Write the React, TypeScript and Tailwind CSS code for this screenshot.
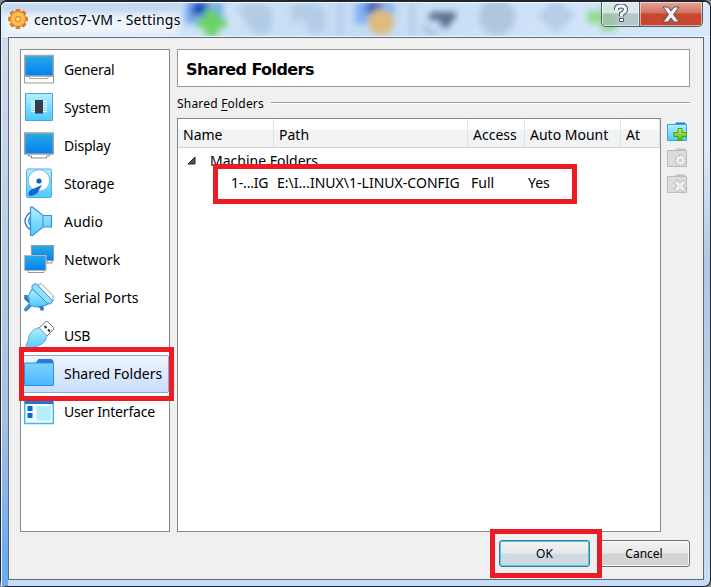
import React from "react";

const ui = "font-['Noto_Sans','Open_Sans',sans-serif]";

function Defs() {
  return (
    <svg width="0" height="0" className="absolute">
      <defs>
        <linearGradient id="screen" x1="0" y1="0" x2="0" y2="1">
          <stop offset="0" stopColor="#29abe2" />
          <stop offset="1" stopColor="#0280f3" />
        </linearGradient>
        <linearGradient id="cyan" x1="0" y1="0" x2="0" y2="1">
          <stop offset="0" stopColor="#b2f1ff" />
          <stop offset="1" stopColor="#4dc8fd" />
        </linearGradient>
        <linearGradient id="folder" x1="0" y1="0" x2="0" y2="1">
          <stop offset="0" stopColor="#80d2fc" />
          <stop offset="1" stopColor="#49b7ff" />
        </linearGradient>
        <linearGradient id="gold" x1="0" y1="0" x2="0" y2="1">
          <stop offset="0" stopColor="#ffc14c" />
          <stop offset="1" stopColor="#f07818" />
        </linearGradient>
        <linearGradient id="green" x1="0" y1="0" x2="0" y2="1">
          <stop offset="0" stopColor="#c8f060" />
          <stop offset="1" stopColor="#4cb80c" />
        </linearGradient>
        <filter id="soft" x="-30%" y="-30%" width="160%" height="160%">
          <feGaussianBlur stdDeviation="3" />
        </filter>
      </defs>
    </svg>
  );
}

/* Every sidebar drawing uses a 32 x 32 box. */
const art: Record<string, React.ReactNode> = {
  General: (
    <>
      <path d="M1.500 22.500h29v6.500h-29z" fill="#fff" stroke="#999" />
      <path d="M6.500 22.500v2h18.500v-2" fill="#fff" stroke="#aaa" />
      <path d="M1.700 1.500h28.600v20.500H1.700z" fill="url(#screen)" stroke="#a9a9a9" strokeWidth="1.4" />
    </>
  ),
  System: (
    <>
      <path d="M2.500 1.500h27v27h-27z" fill="url(#cyan)" stroke="#4ba2e0" />
      <path d="M8 9.500h16M8 12h16M8 14.500h16M8 17h16M8 19.500h16" stroke="#fff" />
      <path d="M12 8h8v13.500h-8z" fill="#363c49" />
    </>
  ),
  Display: (
    <>
      <path d="M5.500 24v2h3v2h15v-2h3v-2" fill="#fff" stroke="#888" />
      <path d="M1.700 3h28.600v21H1.700z" fill="url(#screen)" stroke="#a3a3a3" strokeWidth="1.5" />
    </>
  ),
  Storage: (
    <>
      <rect x="3.500" y="1" width="25" height="28.500" rx="1.500" fill="url(#cyan)" stroke="#55aee8" />
      <circle cx="16" cy="12.500" r="10.800" fill="#fff" stroke="#58a7dc" strokeWidth=".8" />
      <circle cx="16" cy="13" r="2.600" fill="#0865cc" />
      <path d="M19 17L7.500 22q-3.500 4-1.500 5.500t8-2z" fill="#1266d1" />
    </>
  ),
  Audio: (
    <>
      <path d="M7 6.500Q-3 15 7 23.500" fill="none" stroke="#2777c7" strokeWidth="1.4" />
      <path d="M8 10Q3 15 8 20z" fill="#7ed9fc" stroke="#3b91d4" strokeWidth="1.200" />
      <path d="M7.500 1.200h2L20 9.500h8.500v11.500H20L9.500 29.500h-2z" fill="url(#cyan)" stroke="#3b91d4" strokeWidth="1.200" />
      <path d="M20 9v12" stroke="#3b91d4" />
    </>
  ),
  Network: (
    <>
      <path d="M24 17v2h5v-2" fill="#fff" stroke="#888" />
      <path d="M8.500 1.500h22v15h-22z" fill="url(#screen)" stroke="#999" strokeWidth="1.200" />
      <path d="M5 26v2.500h16V26" fill="#fff" stroke="#999" />
      <path d="M1.500 11.500h21.500v15H1.500z" fill="url(#screen)" stroke="#b7b7b7" strokeWidth="1.200" />
    </>
  ),
  "Serial Ports": (
    <>
      <path d="M15 3l3-1.500 12 12V19l-2 2z" fill="#fff" stroke="#999" />
      <path d="M8 22l-5 5.500" stroke="#378fd1" strokeWidth="4" strokeLinecap="round" />
      <path d="M3 13v3.500l4 3.500M19 28.500v-3l-4-3" stroke="#2a79c9" strokeWidth="3.500" fill="none" />
      <path d="M9 7L5.500 13.500l1 10 8 1.500 9-2 3-2z" fill="url(#cyan)" stroke="#378fd1" />
      <path d="M9 3.500L13 1.500l16.500 17-2 3.500-3-.5L9 6.500z" fill="#8fe1fd" stroke="#378fd1" />
    </>
  ),
  USB: (
    <>
      <path d="M16 8l7-6.500h1.500l6 6V9.500L24 16z" fill="#fff" stroke="#777" />
      <path d="M21.500 6l2 2M25 9.500l2 2" stroke="#333" strokeWidth="2" />
      <path d="M16 7.500l8 8.500q-1 6-6 8.500-7 2-10 5.500H3q-1-4 2-9 1-11 11-13.500z" fill="url(#cyan)" stroke="#6aa6d2" />
    </>
  ),
  "Shared Folders": (
    <>
      <path d="M12.500 5l3-4h13l2 2V9H12z" fill="#2a79db" />
      <path d="M1.500 5h29v22.500h-29z" fill="url(#folder)" stroke="#2b91e8" />
    </>
  ),
  "User Interface": (
    <>
      <path d="M1.700 2h28.600v25.500H1.700z" fill="#f6fbff" stroke="#42b5ed" strokeWidth="1.500" />
      <path d="M2 2h28v6H2z" fill="#2475d3" />
      <path d="M4.500 10h5v5h-5zM4.500 17h5v5h-5z" fill="#0868d8" />
      <path d="M13.500 10H28v14.500H13.500z" fill="#b6edfd" />
    </>
  ),
};

const sections: [string, string][] = [
  ["General", "tracking-[-0.15px]"],
  ["System", "tracking-[-0.15px]"],
  ["Display", "tracking-[-0.2px]"],
  ["Storage", "tracking-[-0.1px]"],
  ["Audio", "tracking-[0.2px]"],
  ["Network", "tracking-[0px]"],
  ["Serial Ports", "tracking-[0px]"],
  ["USB", "tracking-[-0.3px]"],
  ["Shared Folders", "tracking-[0px]"],
  ["User Interface", "tracking-[-0.2px]"],
];

function Sidebar() {
  return (
    <nav className="h-[483px] w-[150px] shrink-0 border border-[#828790] bg-white pt-px">
      {sections.map(([name, tracking]) => (
        <div
          key={name}
          className={`flex h-[38px] items-center rounded-[2px] border pl-[2px] ${
            name === "Shared Folders"
              ? "border-[#84acdd] bg-linear-to-b from-[#eef5ff] to-[#c9defc]"
              : "border-transparent"
          }`}
        >
          <svg width="32" height="32" viewBox="0 0 32 32" className="-ml-px shrink-0">
            {art[name]}
          </svg>
          <span className={`ml-[9px] text-[14px] leading-5 whitespace-nowrap ${tracking}`}>{name}</span>
        </div>
      ))}
    </nav>
  );
}

const columns: [string, string][] = [
  ["Name", "w-[96px]"],
  ["Path", "w-[194px]"],
  ["Access", "w-[57px]"],
  ["Auto Mount", "w-[96px]"],
  ["At", "w-[39px]"],
];

function FolderTable() {
  return (
    <div className="h-[414px] w-[484px] border border-[#828790] bg-white text-[14px]">
      <div className="flex h-[29px] border-b border-[#d5d5d5] bg-linear-to-b from-white from-35% to-[#f1f3f5] to-40%">
        {columns.map(([name, width]) => (
          <div key={name} className={`flex items-center border-r border-[#e0e2e5] pt-[3px] pl-[5px] whitespace-nowrap ${width}`}>
            {name}
          </div>
        ))}
      </div>
      <div className="flex h-[25px] items-center pl-[9px]">
        <svg width="9" height="9" viewBox="0 0 9 9">
          <path d="M8 1v7H1z" fill="#555" stroke="#222" />
        </svg>
        <span className="ml-[14px]">Machine Folders</span>
      </div>
      <div className="flex h-[18px] items-center whitespace-nowrap">
        <span className="ml-[53px] w-[46px] tracking-[-0.2px]">1-...IG</span>
        <span className="w-[194px] tracking-[0.02px]">E:\I...INUX\1-LINUX-CONFIG</span>
        <span className="w-[57px]">Full</span>
        <span>Yes</span>
      </div>
    </div>
  );
}

const gearPath =
  "M10.500 1h3l.5 3 2 .8L18.500 3l2.200 2.200L19 8l.8 2 3 .5v3l-3 .5-.8 2 1.700 2.500-2.200 2.200L16 19l-2 .8-.5 3h-3l-.5-3-2-.8-2.500 1.700-2.200-2.200L5 16l-.8-2-3-.5v-3l3-.5L5 8 3.300 5.200 5.500 3 8 4.800l2-.8z";

function ToolIcon({ kind }: { kind: "add" | "edit" | "remove" }) {
  const on = kind === "add";
  return (
    <svg width="22" height="22" viewBox="0 0 22 22">
      <path d="M8.500 4l1.500-2.500h9L20.500 4v3H8.500z" fill={on ? "#2a79d5" : "#c2c2c2"} />
      <path d="M1.500 3.500h19v16h-19z" fill={on ? "url(#cyan)" : "#dcdcdc"} stroke={on ? "#42a2e3" : "#bdbdbd"} />
      {kind === "add" && (
        <path d="M12 7.500h4v4h4.500v4H16v4h-4v-4H7.800v-4H12z" fill="url(#green)" stroke="#48a310" />
      )}
      {kind === "edit" && (
        <g transform="translate(8 7) scale(.54)">
          <path d={gearPath} fill="#f0f0f0" stroke="#b9b9b9" strokeWidth="1.500" />
          <circle cx="12" cy="12" r="3" fill="#c8c8c8" />
        </g>
      )}
      {kind === "remove" && (
        <path d="M8 10l3-3 3 3 3-3 3 3-3 3 3 3-3 3-3-3-3 3-3-3 3-3z" fill="#ededed" stroke="#b9b9b9" />
      )}
    </svg>
  );
}

function TitleBar() {
  return (
    <header className="relative flex h-[35px] items-start overflow-hidden rounded-t-[6px] bg-linear-to-r from-[#dcebfa] via-[#c4dcf5] to-[#d8e9fb]">
      <svg width="709" height="36" className="absolute inset-0">
        <g filter="url(#soft)">
          <path d="M0 0h180v11H0z" fill="#c3d7ec" />
          <path d="M3 12h174v20H3z" fill="#eef5fd" />
          <path d="M184 0h38v22h-38z" fill="#79a9f2" />
          <path d="M191 0h16v13h-16z" fill="#1d4bba" />
          <path d="M204 7h13v8h8v11h-8v8h-13v-8h-8V15h8z" fill="#6cd266" />
          <path d="M236 6q15-10 35 0v22q-10 8-20 2zM290 5q20-9 34 3v23h-16l-6-15-12 6z" fill="#b3cce6" />
          <path d="M338 0h3v36h-3zM410 0h3v36h-3z" fill="#a7bfda" />
          <path d="M354 0h39v22h-39z" fill="#83b2f3" />
          <path d="M365 0h16v12h-16z" fill="#395eb9" />
          <circle cx="380" cy="20" r="13" fill="#ddbc7c" />
          <path d="M430 10h25v5l-10 12q-7-3-6-9l-12 0z" fill="#56718e" />
          <path d="M422 24q5 8 14 7" fill="none" stroke="#9db5ce" strokeWidth="4" />
          <circle cx="496" cy="15" r="18" fill="#aec6e0" />
          <path d="M536 14l19-19 19 19-19 18z" fill="#b7cfea" />
          <path d="M586 9h14V3h15v26h-15v-8h-14z" fill="#92da8c" />
        </g>
        <path d="M0 .500h709" stroke="#eff8ff" />
        <path d="M0 34.500h709" stroke="#eef6ff" />
      </svg>
      <svg width="20" height="20" viewBox="0 0 24 24" className="relative mt-[7px] ml-[7px]">
        <path d={gearPath} fill="url(#gold)" stroke="#e07b24" strokeWidth="2.500" strokeLinejoin="round" />
        <circle cx="12" cy="12" r="8.500" fill="#ffbd52" />
        <circle cx="12" cy="12" r="3" fill="#ffe3a0" stroke="#e88a2a" strokeWidth="1.500" />
      </svg>
      <span className="relative mt-[8px] ml-[6px] text-[14px] leading-5 tracking-[0.21px] whitespace-nowrap">centos7-VM - Settings</span>
      <div className="relative mr-[7px] ml-auto flex h-[25px] w-[102px] overflow-hidden rounded-b-[5px] border border-t-0 border-[#4e5e6c]">
        <div className="flex w-[38px] items-center justify-center border-r border-[#59616e] bg-linear-to-b from-[#dce9ecd0] from-45% to-[#a6bab7b0] to-50% inset-ring inset-ring-white/50">
          <svg width="16" height="20" viewBox="0 0 16 20">
            <path d="M3.500 6V5q0-3 4.500-3t4.500 3.500Q12.500 8 8.500 10v2.500" fill="none" stroke="#4d5363" strokeWidth="5" />
            <path d="M3.500 6V5q0-3 4.500-3t4.500 3.500Q12.500 8 8.500 10v2.500" fill="none" stroke="#f4f4f4" strokeWidth="3" />
            <path d="M6.500 14.500h4v3h-4z" fill="#fff" stroke="#4d5363" />
          </svg>
        </div>
        <div className="flex flex-1 items-center justify-center bg-linear-to-b from-[#e4a499] from-0% via-[#d47161] via-45% to-[#c94630] to-50% inset-ring inset-ring-white/50">
          <svg width="20" height="17" viewBox="0 0 20 17">
            <path d="M2 1h5l3 4 3-4h5l-5.500 7.500L18 16h-5l-3-4-3 4H2l5.500-7.500z" fill="#f5f4f5" stroke="#55505d" />
          </svg>
        </div>
      </div>
    </header>
  );
}

function DialogButton({ label, primary }: { label: string; primary?: boolean }) {
  return (
    <button
      className={`flex h-[27px] items-center justify-center rounded-[3px] border bg-linear-to-b from-[#f2f2f2] from-0% via-[#e8e9ea] via-48% text-[12px] ${
        primary
          ? "w-[91px] border-[#3b7b9b] to-[#ced9e1] to-52% inset-ring inset-ring-[#45ccef]"
          : "w-[92px] border-[#707070] to-[#d3d3d3] to-52% inset-ring inset-ring-white/80"
      }`}
    >
      {label}
    </button>
  );
}

export default function App() {
  return (
    <div className={`relative h-[587px] w-[711px] overflow-hidden bg-[#888] text-black ${ui}`}>
      <Defs />
      <div className="flex h-[587px] flex-col rounded-[7px] border border-t-2 border-[#22252e] bg-linear-to-b from-[#dcebfb] from-25% via-[#adc7e5] via-45% to-[#c6def6]">
        <TitleBar />
        <div className="flex min-h-0 flex-1">
          <div className="w-[7px] shrink-0 border-l border-[#e8f4ff] bg-linear-to-b from-[#cfdeed] from-0% via-[#a6c0df] via-70% to-[#6caaf1] to-95%" />
          <main className="flex h-[543px] w-[696px] shrink-0 flex-col border border-[#5c697a] bg-[#f0f0f0] pt-[11px] pl-[11px]">
            <div className="flex h-[483px]">
              <Sidebar />
              <section className="ml-[7px] w-[513px]">
                <h1 className="flex h-[38px] items-center border border-[#999] bg-white pt-[3px] pl-[8px] font-['DejaVu_Sans',sans-serif] text-[16px] font-bold tracking-[-0.58px]">
                  Shared Folders
                </h1>
                <div className="flex h-[31px] items-center pt-[2px] text-[12px] tracking-[0.2px]">
                  <span>
                    Shared <u className="underline-offset-2">F</u>olders
                  </span>
                  <span className="-mt-[2px] ml-[7px] h-[2px] flex-1 border-t border-[#a0a0a0] bg-white" />
                </div>
                <div className="flex">
                  <FolderTable />
                  <div className="ml-[5px] flex flex-col gap-[4px] pt-[3px]">
                    <ToolIcon kind="add" />
                    <ToolIcon kind="edit" />
                    <ToolIcon kind="remove" />
                  </div>
                </div>
              </section>
            </div>
            <footer className="mt-[8px] mr-[13px] flex justify-end gap-[8px]">
              <DialogButton label="OK" primary />
              <DialogButton label="Cancel" />
            </footer>
          </main>
        </div>
      </div>
      <div className="absolute top-[347px] left-[19px] h-[54px] w-[155px] border-[5px] border-[#ed1c24]" />
      <div className="absolute top-[164px] left-[213px] h-[40px] w-[364px] border-[5px] border-[#ed1c24]" />
      <div className="absolute top-[529px] left-[490px] h-[49px] w-[112px] border-[5px] border-[#ed1c24]" />
    </div>
  );
}
